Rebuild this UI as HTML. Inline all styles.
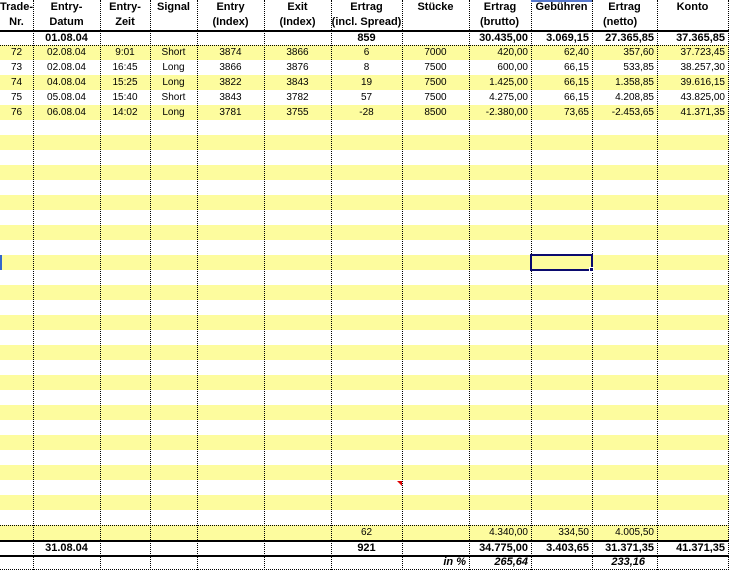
<!DOCTYPE html>
<html><head><meta charset="utf-8"><style>
*{margin:0;padding:0;box-sizing:border-box}
body{width:731px;height:571px;overflow:hidden;background:#fff;position:relative;font-family:"Liberation Sans",Arial,sans-serif;font-size:10px;color:#000}
.stripes{position:absolute;left:0;top:45px;width:729px;height:480px;background:repeating-linear-gradient(to bottom,#fdfc9e 0,#fdfc9e 15px,#fff 15px,#fff 30px)}
.v{position:absolute;top:0;height:570px;border-left:1px dotted #000}
.h{position:absolute;left:0;width:729px}
.r{position:absolute;left:0;height:15px;line-height:15px;white-space:nowrap}
.c{position:absolute;top:0;height:15px;text-align:center}
.rt{text-align:right;padding-right:3px}
.b{font-weight:bold;font-size:11px}
</style></head><body>
<div class="stripes"></div>
<div class="h" style="top:525px;height:15px;background:#fdfc9e"></div>

<div class="v" style="left:33px"></div>
<div class="v" style="left:100px"></div>
<div class="v" style="left:150px"></div>
<div class="v" style="left:197px"></div>
<div class="v" style="left:264px"></div>
<div class="v" style="left:331px"></div>
<div class="v" style="left:402px"></div>
<div class="v" style="left:469px"></div>
<div class="v" style="left:531px"></div>
<div class="v" style="left:592px"></div>
<div class="v" style="left:657px"></div>
<div class="v" style="left:728px"></div>

<div class="h" style="top:30px;border-top:2px solid #000"></div>
<div class="h" style="top:45px;border-top:1px dotted #000"></div>
<div class="h" style="top:525px;border-top:1px dotted #000"></div>
<div class="h" style="top:540px;border-top:2px solid #000"></div>
<div class="h" style="top:555px;border-top:2px solid #000"></div>
<div class="h" style="top:569px;border-top:1px dotted #000"></div>
<div style="position:absolute;left:531px;top:0;width:61px;border-top:2px solid #5577cc"></div>

<div class="r b" style="top:0">
<div class="c" style="left:0;width:33px">Trade-</div><div class="c" style="left:33px;width:67px">Entry-</div><div class="c" style="left:100px;width:50px">Entry-</div><div class="c" style="left:150px;width:47px">Signal</div><div class="c" style="left:197px;width:67px">Entry</div><div class="c" style="left:264px;width:67px">Exit</div><div class="c" style="left:331px;width:71px">Ertrag</div><div class="c" style="left:402px;width:67px">Stücke</div><div class="c" style="left:469px;width:62px">Ertrag</div><div class="c" style="left:531px;width:61px">Gebühren</div><div class="c" style="left:592px;width:65px">Ertrag</div><div class="c" style="left:657px;width:71px">Konto</div>
</div>
<div class="r b" style="top:15px">
<div class="c" style="left:0;width:33px">Nr.</div><div class="c" style="left:33px;width:67px">Datum</div><div class="c" style="left:100px;width:50px">Zeit</div><div class="c" style="left:197px;width:67px">(Index)</div><div class="c" style="left:264px;width:67px">(Index)</div><div class="c" style="left:331px;width:71px">(incl. Spread)</div><div class="c" style="left:469px;width:62px;text-align:left;padding-left:11px">(brutto)</div><div class="c" style="left:592px;width:65px;text-align:left;padding-left:11px">(netto)</div>
</div>
<div class="r b" style="top:31px">
<div class="c" style="left:33px;width:67px">01.08.04</div><div class="c" style="left:331px;width:71px">859</div><div class="c rt" style="left:469px;width:62px">30.435,00</div><div class="c rt" style="left:531px;width:61px">3.069,15</div><div class="c rt" style="left:592px;width:65px">27.365,85</div><div class="c rt" style="left:657px;width:71px">37.365,85</div>
</div>

<div class="r" style="top:45px"><div class="c" style="left:0;width:33px">72</div><div class="c" style="left:33px;width:67px">02.08.04</div><div class="c" style="left:100px;width:50px">9:01</div><div class="c" style="left:150px;width:47px">Short</div><div class="c" style="left:197px;width:67px">3874</div><div class="c" style="left:264px;width:67px">3866</div><div class="c" style="left:331px;width:71px">6</div><div class="c" style="left:402px;width:67px">7000</div><div class="c rt" style="left:469px;width:62px">420,00</div><div class="c rt" style="left:531px;width:61px">62,40</div><div class="c rt" style="left:592px;width:65px">357,60</div><div class="c rt" style="left:657px;width:71px">37.723,45</div></div>
<div class="r" style="top:60px"><div class="c" style="left:0;width:33px">73</div><div class="c" style="left:33px;width:67px">02.08.04</div><div class="c" style="left:100px;width:50px">16:45</div><div class="c" style="left:150px;width:47px">Long</div><div class="c" style="left:197px;width:67px">3866</div><div class="c" style="left:264px;width:67px">3876</div><div class="c" style="left:331px;width:71px">8</div><div class="c" style="left:402px;width:67px">7500</div><div class="c rt" style="left:469px;width:62px">600,00</div><div class="c rt" style="left:531px;width:61px">66,15</div><div class="c rt" style="left:592px;width:65px">533,85</div><div class="c rt" style="left:657px;width:71px">38.257,30</div></div>
<div class="r" style="top:75px"><div class="c" style="left:0;width:33px">74</div><div class="c" style="left:33px;width:67px">04.08.04</div><div class="c" style="left:100px;width:50px">15:25</div><div class="c" style="left:150px;width:47px">Long</div><div class="c" style="left:197px;width:67px">3822</div><div class="c" style="left:264px;width:67px">3843</div><div class="c" style="left:331px;width:71px">19</div><div class="c" style="left:402px;width:67px">7500</div><div class="c rt" style="left:469px;width:62px">1.425,00</div><div class="c rt" style="left:531px;width:61px">66,15</div><div class="c rt" style="left:592px;width:65px">1.358,85</div><div class="c rt" style="left:657px;width:71px">39.616,15</div></div>
<div class="r" style="top:90px"><div class="c" style="left:0;width:33px">75</div><div class="c" style="left:33px;width:67px">05.08.04</div><div class="c" style="left:100px;width:50px">15:40</div><div class="c" style="left:150px;width:47px">Short</div><div class="c" style="left:197px;width:67px">3843</div><div class="c" style="left:264px;width:67px">3782</div><div class="c" style="left:331px;width:71px">57</div><div class="c" style="left:402px;width:67px">7500</div><div class="c rt" style="left:469px;width:62px">4.275,00</div><div class="c rt" style="left:531px;width:61px">66,15</div><div class="c rt" style="left:592px;width:65px">4.208,85</div><div class="c rt" style="left:657px;width:71px">43.825,00</div></div>
<div class="r" style="top:105px"><div class="c" style="left:0;width:33px">76</div><div class="c" style="left:33px;width:67px">06.08.04</div><div class="c" style="left:100px;width:50px">14:02</div><div class="c" style="left:150px;width:47px">Long</div><div class="c" style="left:197px;width:67px">3781</div><div class="c" style="left:264px;width:67px">3755</div><div class="c" style="left:331px;width:71px">-28</div><div class="c" style="left:402px;width:67px">8500</div><div class="c rt" style="left:469px;width:62px">-2.380,00</div><div class="c rt" style="left:531px;width:61px">73,65</div><div class="c rt" style="left:592px;width:65px">-2.453,65</div><div class="c rt" style="left:657px;width:71px">41.371,35</div></div>

<div class="r" style="top:525px"><div class="c" style="left:331px;width:71px">62</div><div class="c rt" style="left:469px;width:62px">4.340,00</div><div class="c rt" style="left:531px;width:61px">334,50</div><div class="c rt" style="left:592px;width:65px">4.005,50</div></div>
<div class="r b" style="top:541px"><div class="c" style="left:33px;width:67px">31.08.04</div><div class="c" style="left:331px;width:71px">921</div><div class="c rt" style="left:469px;width:62px">34.775,00</div><div class="c rt" style="left:531px;width:61px">3.403,65</div><div class="c rt" style="left:592px;width:65px">31.371,35</div><div class="c rt" style="left:657px;width:71px">41.371,35</div></div>
<div class="r b" style="top:555px;font-style:italic"><div class="c rt" style="left:402px;width:67px">in %</div><div class="c rt" style="left:469px;width:62px">265,64</div><div class="c rt" style="left:592px;width:65px;padding-right:12px">233,16</div></div>

<div style="position:absolute;left:530px;top:254px;width:63px;height:17px;border:2px solid #0a0a6e"></div>
<div style="position:absolute;left:589px;top:267px;width:5px;height:5px;background:#0a0a6e;border:1px solid #fff"></div>
<div style="position:absolute;left:0;top:255px;width:2px;height:15px;background:#3366cc"></div>
<div style="position:absolute;left:397px;top:481px;width:0;height:0;border-left:5px solid transparent;border-top:5px solid #e00000"></div>
</body></html>
